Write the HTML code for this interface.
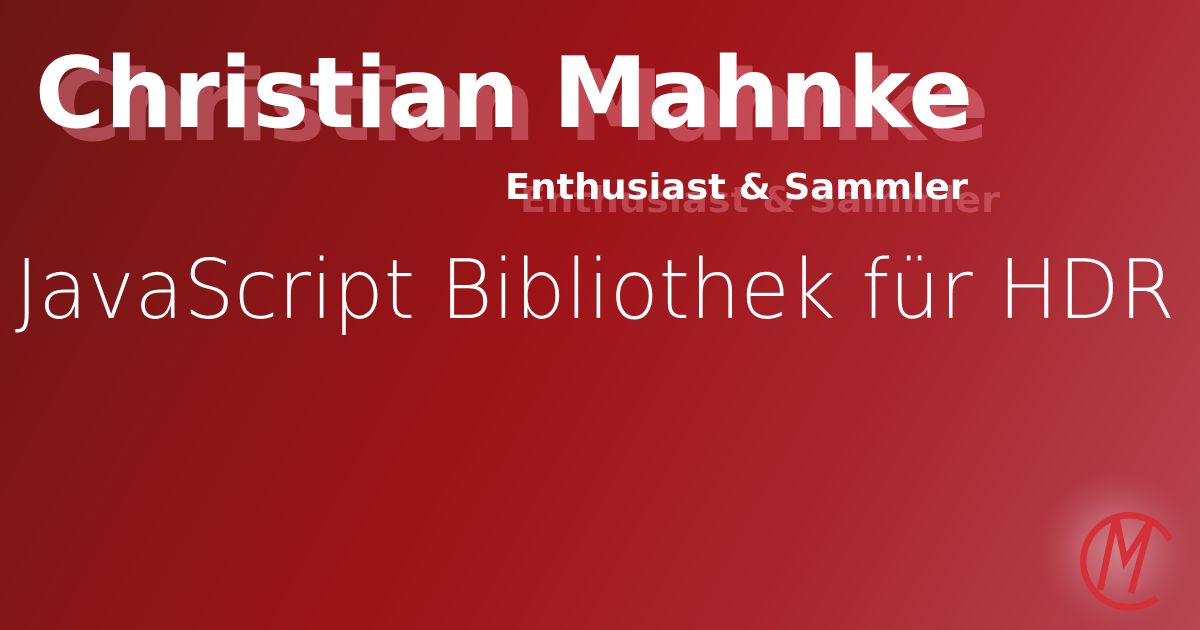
<!DOCTYPE html>
<html><head><meta charset="utf-8"><style>
html,body{margin:0;padding:0;width:1200px;height:630px;overflow:hidden}
svg{display:block}
</style></head><body>
<svg width="1200" height="630" viewBox="0 0 1200 630" xmlns="http://www.w3.org/2000/svg">
<defs>
<linearGradient id="bg" x1="0" y1="0" x2="1200" y2="630" gradientUnits="userSpaceOnUse">
<stop offset="0" stop-color="#6c1716"/>
<stop offset="0.45" stop-color="#9d1418"/>
<stop offset="0.7" stop-color="#a8242c"/>
<stop offset="1" stop-color="#b64652"/>
</linearGradient>
<radialGradient id="glow" cx="1118" cy="550" r="80" gradientUnits="userSpaceOnUse">
<stop offset="0" stop-color="#cf7f8a"/>
<stop offset="0.5" stop-color="#c05a66"/>
<stop offset="1" stop-color="#b64652" stop-opacity="0"/>
</radialGradient>
</defs>
<rect width="1200" height="630" fill="url(#bg)"/>
<circle cx="1118" cy="552" r="80" fill="url(#glow)"/>
<g font-family="DejaVu Sans, sans-serif" font-weight="bold">
<text x="51" y="140" font-size="98" fill="#f08a98" fill-opacity="0.45" textLength="938" lengthAdjust="spacingAndGlyphs">Christian Mahnke</text>
<text x="35" y="127" font-size="98" fill="#ffffff" textLength="938" lengthAdjust="spacingAndGlyphs">Christian Mahnke</text>
<text x="520" y="212" font-size="36" fill="#f08a98" fill-opacity="0.4" textLength="480" lengthAdjust="spacingAndGlyphs">Enthusiast &amp; Sammler</text>
<text x="505" y="199" font-size="36" fill="#ffffff" textLength="463" lengthAdjust="spacingAndGlyphs">Enthusiast &amp; Sammler</text>
</g>
<text x="15" y="318" font-family="DejaVu Sans, sans-serif" font-weight="200" font-size="82" fill="#ffffff" textLength="1160" lengthAdjust="spacingAndGlyphs">JavaScript Bibliothek für HDR</text>
<g fill="none" stroke="#d52f38" stroke-width="6.5" stroke-linejoin="miter">
<path d="M1170 540 A46 46 0 1 0 1157 598"/>
<path d="M1100 590 L1116 516 L1125 561 L1151 520 L1131 593"/>
</g>
</svg>
</body></html>
